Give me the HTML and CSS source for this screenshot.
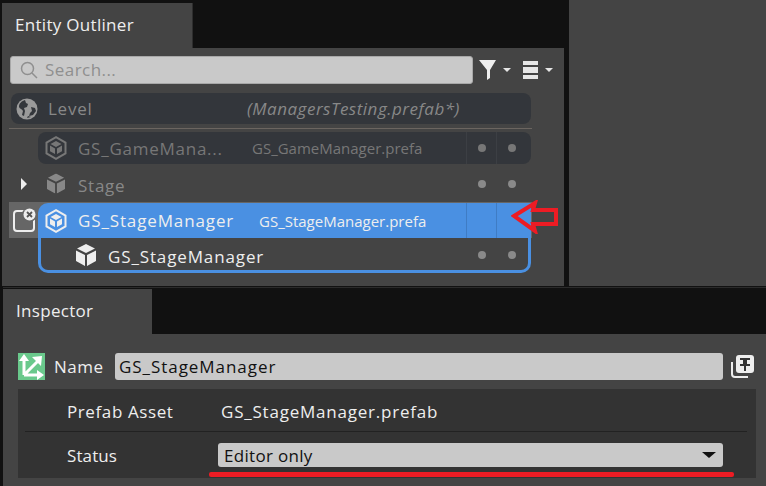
FILE: index.html
```html
<!DOCTYPE html>
<html lang="en">
<head>
  <meta charset="UTF-8" />
  <title>Entity Outliner</title>
  <link rel="stylesheet" href="styles.css">
</head>
<body>

  <div class="top">
    <div class="outliner">
      <div class="tabbar"><div class="tab">Entity Outliner</div></div>
      <div class="panel">
        <div class="toolbar">
          <div class="search">
            <svg class="search-icon" width="18" height="18" viewBox="0 0 18 18"><circle cx="7.5" cy="7.5" r="6" fill="none" stroke="#8f8f8f" stroke-width="1.5"/><path d="M12 12l5 5" stroke="#8f8f8f" stroke-width="1.5"/></svg>
            <span class="search-text">Search...</span>
          </div>
          <svg class="tool-icon" width="17" height="20" viewBox="0 0 17 20"><path d="M0 0h17l-6 10v8l-3 2V10z" fill="#eee"/></svg>
          <span class="caret"></span>
          <svg class="tool-icon menu-icon" width="15" height="18" viewBox="0 0 15 18"><path d="M0 0h15v4H0zM0 6h15v6H0zM0 14h15v4H0z" fill="#e6e6e6"/></svg>
          <span class="caret"></span>
        </div>

        <div class="row level">
          <svg class="icon" width="22" height="22" viewBox="0 0 22 22"><circle cx="11" cy="11" r="10.5" fill="#9a9a9a"/><path d="M9 2c-3 1-6 3-6 7 1 2 3 2 4 4l-1 4 2 1 1-5-1-3 3-1 1-3-2-1zM15 9l4 1 1 3-3 4-4 1 1-3 2-2zM12 18l3 1-4 1z" fill="#33363b"/></svg>
          <span class="name">Level</span>
          <span class="level-file">(ManagersTesting.prefab*)</span>
        </div>
        <div class="sep"></div>

        <div class="row entity game">
          <svg class="icon" width="22" height="24" viewBox="0 0 22 24"><use href="#prefab"/></svg>
          <span class="name name-game">GS_GameMana...</span>
          <span class="file">GS_GameManager.prefa</span>
          <span class="cell"><i class="dot"></i></span><span class="cell"><i class="dot"></i></span>
        </div>

        <div class="row entity stage">
          <span class="expander"></span>
          <svg class="icon" width="18" height="21" viewBox="0 0 20 22"><use href="#cube"/></svg>
          <span class="name">Stage</span>
          <span class="cells"><span class="cell"><i class="dot"></i></span><span class="cell"><i class="dot"></i></span></span>
        </div>

        <div class="selected-wrap">
          <div class="closed-btn">
            <svg width="24" height="24" viewBox="0 0 24 24">
              <rect x="2" y="3" width="20" height="20" rx="3" fill="none" stroke="#eee" stroke-width="2"/>
              <circle cx="17.5" cy="6.5" r="7.5" fill="#666"/>
              <circle cx="17.5" cy="6.5" r="6" fill="#eee"/>
              <path d="M15 4l5 5M20 4l-5 5" stroke="#555" stroke-width="1.8"/>
            </svg>
          </div>
          <div class="row entity selected">
            <svg class="icon" width="22" height="24" viewBox="0 0 22 24"><use href="#prefab"/></svg>
            <span class="name name-selected">GS_StageManager</span>
            <span class="file">GS_StageManager.prefa</span>
            <span class="cell"></span><span class="cell"></span>
          </div>
        </div>

        <div class="row child">
          <svg class="icon" width="20" height="22" viewBox="0 0 20 22"><use href="#cube"/></svg>
          <span class="name">GS_StageManager</span>
          <span class="cells"><span class="cell"><i class="dot"></i></span><span class="cell"><i class="dot"></i></span></span>
        </div>
      </div>
    </div>
    <div class="side"></div>
  </div>

  <div class="inspector">
    <div class="tabbar"><div class="tab tab-inspector">Inspector</div></div>
    <div class="panel inspector-body">
      <div class="name-row">
        <svg class="transform-icon" width="27" height="27" viewBox="0 0 27 27">
          <rect width="27" height="27" fill="#6ac98c"/>
          <path d="M6 22V7M6 22h15M6 22L20 8" stroke="#fff" stroke-width="3" fill="none"/>
          <path d="M6 1l5 7H1zM26 22l-7 5v-10zM24 3l-1 10-9-9z" fill="#fff"/>
        </svg>
        <span class="field-label">Name</span>
        <div class="input gs-text">GS_StageManager</div>
        <svg class="pin-icon" width="23" height="23" viewBox="0 0 23 23">
          <path d="M1 7v12a3 3 0 0 0 3 3h13" fill="none" stroke="#eee" stroke-width="2"/>
          <rect x="5" y="0" width="18" height="18" rx="3" fill="#eee"/>
          <path d="M9 3h10v2h-3v4h3v2h-4v5h-2v-5H9V9h3V5H9z" fill="#333"/>
        </svg>
      </div>

      <div class="group">
        <div class="prop">
          <span class="prop-label prefab-label">Prefab Asset</span>
          <span class="prefab-value">GS_StageManager.prefab</span>
        </div>
        <div class="prop prop-status">
          <span class="prop-label">Status</span>
          <div class="combo">Editor only<span class="combo-arrow"></span></div>
        </div>
      </div>
    </div>
  </div>

  <!-- red markup drawn over the screenshot -->
  <svg class="mark-arrow" width="48" height="34" viewBox="0 0 48 34"><path d="M3 16L24 3l-2 7h23v14H22l2 7z" fill="none" stroke="#ed1c24" stroke-width="4"/></svg>
  <div class="mark-line"></div>

  <svg class="defs" width="0" height="0">
    <symbol id="prefab" viewBox="0 0 22 24">
      <path d="M11 1.2l9.5 5.4v10.8L11 22.8 1.5 17.4V6.6z" fill="none" stroke="currentColor" stroke-width="2"/>
      <path d="M11 5l5.5 3L11 11 5.5 8zM5 9.6l5 2.8V18l-5-2.8zM17 9.6l-5 2.8V18l5-2.8z" fill="currentColor"/>
    </symbol>
    <symbol id="cube" viewBox="0 0 20 22">
      <path d="M10 0l9 4.5L10 9 1 4.5zM0 6.5l9 4.5v11L0 17zM20 6.5L11 11v11l9-5z" fill="currentColor"/>
    </symbol>
  </svg>

</body>
</html>
```

FILE: styles.css
```css
body {
  font-family: 'Open Sans', sans-serif;
  font-size: 17px;
  letter-spacing: .3px;
  background: #111;
  color: #eee;
  margin: 0;
  width: 766px;
  height: 486px;
  overflow: hidden;
  position: relative;
}
svg {
  display: block;
  flex: none;
  color: inherit;
}
.defs {
  position: absolute;
}
.gs-text {
  letter-spacing: .95px;
}
.top {
  display: flex;
  height: 286px;
  padding-left: 2px;
  border-bottom: 1px solid #111;
}
.outliner {
  width: 562px;
  margin-right: 5px;
  display: flex;
  flex-direction: column;
}
.side {
  flex: 1;
  background: #444;
}
.tabbar {
  height: 45px;
  padding-top: 3px;
  flex: none;
}
.tab {
  width: 177px;
  height: 45px;
  line-height: 43px;
  padding-left: 13px;
  background: #444;
  border-right: 1px solid #2e2e2e;
}
.panel {
  flex: 1;
  background: #444;
  padding: 8px 0 0 7px;
}

.toolbar {
  display: flex;
  align-items: center;
  height: 28px;
  margin-left: 1px;
  margin-bottom: 9px;
}
.search {
  width: 461px;
  height: 26px;
  display: flex;
  align-items: center;
  gap: 7px;
  background: #c9c9c9;
  border: 1px solid #a8a8a8;
  border-radius: 3px;
  color: #8f8f8f;
}
.search-icon {
  margin-left: 9px;
}
.search-text {
  letter-spacing: .45px;
  margin-top: -2px;
}
.tool-icon {
  margin-left: 6px;
}
.menu-icon {
  margin-left: 12px;
}
.caret {
  margin-left: 7px;
  border-top: 4px solid #e6e6e6;
  border-left: 4.5px solid transparent;
  border-right: 4.5px solid transparent;
}

.row {
  display: flex;
  align-items: center;
  box-sizing: border-box;
}
.level {
  width: 520px;
  height: 31px;
  margin-left: 2px;
  padding-left: 5px;
  background: #33363b;
  border-radius: 8px;
  color: #888;
}
.level .name {
  margin-left: 10px;
  width: 199px;
}
.level-file {
  font-style: italic;
  letter-spacing: .5px;
}
.sep {
  width: 523px;
  height: 1px;
  margin-top: 4px;
  background: #6b6560;
}

.entity {
  width: 493px;
  margin-left: 29px;
}
.game {
  height: 32px;
  margin-top: 3px;
  padding-left: 7px;
  background: #33363b;
  border-radius: 8px;
  color: #777;
}
.name {
  margin-left: 11px;
  letter-spacing: .75px;
}
.name-game {
  width: 174px;
}
.name-selected {
  width: 181px;
  letter-spacing: .87px;
}
.file {
  font-size: 15px;
  letter-spacing: 0;
  flex: 1;
  overflow: hidden;
}
.cell {
  width: 30px;
  align-self: stretch;
  display: flex;
  align-items: center;
  justify-content: center;
  border-left: 1px solid #3c3f44;
  box-sizing: border-box;
}
.cell:last-of-type {
  margin-right: 5px;
}
.cells {
  margin-left: auto;
  display: flex;
  align-self: stretch;
}
.cells .cell {
  border-left: 0;
}
.dot {
  width: 8px;
  height: 8px;
  border-radius: 50%;
  background: #777;
}
.stage {
  height: 38px;
  padding-left: 9px;
  color: #888;
  position: relative;
}
.stage .dot,
.child .dot {
  background: #8a8a8a;
}
.stage .name {
  margin: 4px 0 0 13px;
}
.stage .cells {
  padding-top: 2px;
}
.stage .cell:last-of-type {
  margin-right: 4px;
}
.expander {
  position: absolute;
  left: -17px;
  top: 14px;
  border-left: 6px solid #eee;
  border-top: 6px solid transparent;
  border-bottom: 6px solid transparent;
}

.selected-wrap {
  display: flex;
  width: 523px;
  height: 36px;
  box-sizing: border-box;
  padding: 1px 1px 0 0;
  background: #666;
}
.closed-btn {
  width: 29px;
  padding: 5px 0 0 3px;
  box-sizing: border-box;
}
.selected {
  width: 493px;
  margin-left: 0;
  padding-left: 7px;
  background: #4a90e2;
  border-top-left-radius: 10px;
}
.selected .cell {
  border-left-color: #3f7cc4;
}
.child {
  width: 493px;
  height: 35px;
  margin-left: 29px;
  padding-left: 35px;
  padding-top: 2px;
  border: 3px solid #4a90e2;
  border-top: 0;
  border-radius: 0 0 10px 10px;
}
.child .name {
  margin: 3px 0 0 12px;
  letter-spacing: .87px;
}
.child .cell:last-of-type {
  margin-right: 1px;
}

.inspector {
  margin-left: 3px;
  padding-top: 1px;
  border-top: 1px solid #2b2b2b;
  height: 198px;
  display: flex;
  flex-direction: column;
}
.inspector .tabbar {
  padding-top: 0;
}
.tab-inspector {
  width: 136px;
  border-right: 0;
}
.inspector-body {
  padding: 19px 0 0 15px;
}
.name-row {
  display: flex;
  align-items: center;
  height: 27px;
  margin-bottom: 9px;
}
.field-label {
  margin-left: 9px;
  width: 61px;
  letter-spacing: .5px;
}
.input {
  width: 604px;
  height: 27px;
  line-height: 27px;
  padding-left: 4px;
  background: #c9c9c9;
  border-radius: 3px;
  color: #111;
}
.pin-icon {
  margin-left: 8px;
}
.group {
  width: 738px;
  height: 89px;
  background: #333;
}
.prop {
  display: flex;
  align-items: center;
  height: 42px;
  box-sizing: content-box;
  margin: 0 9px 0 7px;
  padding-left: 42px;
  border-bottom: 1px solid #222;
}
.prop-label {
  width: 154px;
}
.prefab-label,
.prefab-value {
  margin-top: 2px;
}
.prefab-label {
  letter-spacing: .6px;
}
.prefab-value {
  letter-spacing: .78px;
}
.prop-status {
  height: 46px;
  border-bottom: 0;
}
.prop-status .prop-label {
  width: 151px;
  letter-spacing: .1px;
}
.combo {
  width: 505px;
  height: 24px;
  line-height: 25px;
  padding-left: 6px;
  box-sizing: border-box;
  background: #c9c9c9;
  border-radius: 3px;
  color: #111;
  position: relative;
}
.combo-arrow {
  position: absolute;
  right: 7px;
  top: 9px;
  border-top: 6px solid #111;
  border-left: 7px solid transparent;
  border-right: 7px solid transparent;
}

.mark-arrow {
  position: absolute;
  left: 511px;
  top: 200px;
}
.mark-line {
  position: absolute;
  left: 209px;
  top: 472px;
  width: 525px;
  height: 5px;
  border-radius: 2px;
  background: #ed1c24;
}
```
